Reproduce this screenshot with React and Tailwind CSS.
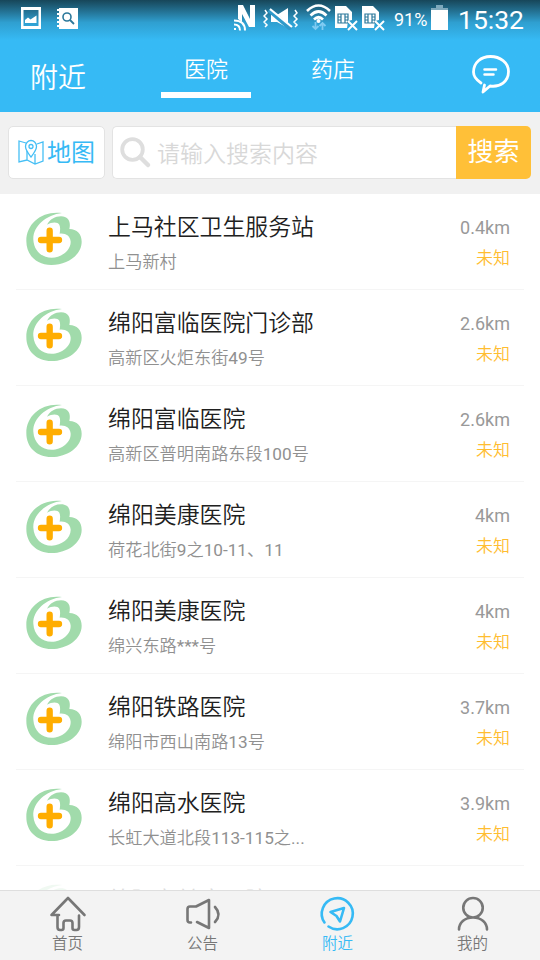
const hospitals = [
  ["上马社区卫生服务站", "上马新村", "0.4km"],
  ["绵阳富临医院门诊部", "高新区火炬东街49号", "2.6km"],
  ["绵阳富临医院", "高新区普明南路东段100号", "2.6km"],
  ["绵阳美康医院", "荷花北街9之10-11、11", "4km"],
  ["绵阳美康医院", "绵兴东路***号", "4km"],
  ["绵阳铁路医院", "绵阳市西山南路13号", "3.7km"],
  ["绵阳高水医院", "长虹大道北段113-115之...", "3.9km"],
];

function Logo() {
  return (
    <svg className="h-[76px] w-[76px] shrink-0" viewBox="0 0 228 228">
      <path
        fill="#a1dbab"
        d="M138 39C80 31 31 68 31 123C31 166 62 195 106 195C154 195 197 165 197 125C197 102 183 87 160 87C165 66 158 49 135 49C117 49 102 58 93 74C107 66 125 65 130 74C134 83 132 92 131 101C149 99 163 108 164 125C165 151 137 173 107 173C77 173 54 152 52 119C50 80 90 44 138 39Z"
      />
      <path d="M101 92V148M75 120H129" stroke="#ffad00" strokeWidth="19" strokeLinecap="round" />
    </svg>
  );
}

function SimIcon() {
  return (
    <svg className="h-[26px] w-[24px]" viewBox="0 0 24 26">
      <path fill="#fff" d="M1 1H12L18 7V15L14 16L13 23H1Z" />
      <path d="M4 9H14V18H4ZM7 9V18M11 9V18M4 12H7M11 12H14M4 15H7M11 15H14" fill="none" stroke="#2b789b" strokeWidth="1.2" />
      <path d="M14 16L23 25M23 16L14 25" stroke="#fff" strokeWidth="2" />
    </svg>
  );
}

function StatusBar() {
  return (
    <div className="flex h-[38px] items-start text-white">
      <svg className="mt-[7px] ml-[21px] h-[22px] w-5" viewBox="0 0 20 22">
        <path fill="#fff" fillRule="evenodd" d="M0 0H20V22H0ZM2.5 3V19H17.500V3Z" />
        <path fill="#fff" d="M4 16V13L7 10.500L9.500 12.500L15.500 8.500V16Z" />
      </svg>
      <svg className="mt-[8px] ml-4 h-[21px] w-[21px]" viewBox="0 0 21 21">
        <path fill="#fff" d="M2 0H21V21H2V19H0V17H2V15H0V13H2V11H0V9H2V7H0V5H2V3H0V1H2Z" />
        <circle cx="10" cy="9" r="4" fill="none" stroke="#2b789b" strokeWidth="1.600" />
        <path d="M13 12L17 16" stroke="#2b789b" strokeWidth="1.800" />
      </svg>
      <svg className="mt-1 ml-[155px] h-[28px] w-[24px] shrink-0" viewBox="0 0 24 28">
        <path fill="#fff" d="M5 15V1H10L17 15V1H22V23H16L9 10V18Z" />
        <path d="M1 25H3M1 20.500Q7 20.500 7 26.500M1 16.500Q12 16.500 12 26.500" fill="none" stroke="#fff" strokeWidth="2" />
      </svg>
      <svg className="mt-2 ml-[6px] h-[22px] w-[36px] shrink-0" viewBox="0 0 36 22">
        <path fill="#fff" d="M8 7H14L25 0V20L14 14H8Z" />
        <path d="M6 2L28 21" stroke="#2f9aca" strokeWidth="4.500" />
        <path d="M7 1L29 19" stroke="#fff" strokeWidth="2.200" />
        <path d="M2 2L4 5L1 8L4 11L1 14L4 17L2 19M32 2L34 5L31 8L34 11L31 14L34 17L32 19" fill="none" stroke="#fff" strokeWidth="1.500" />
      </svg>
      <svg className="mt-1 ml-[7px] h-[28px] w-[27px] shrink-0" viewBox="0 0 27 28">
        <path d="M1 7Q12.500 -4 24 7M4.500 11.500Q12.500 3.500 20.500 11.500M8 15.500Q12.500 11 17 15.500" fill="none" stroke="#fff" strokeWidth="2.600" />
        <circle cx="12.500" cy="17" r="2" fill="#fff" />
        <path d="M9.500 18V25M6.500 22L9.500 25L12.500 22M16.500 26V19M13.500 22L16.500 19L19.500 22" fill="none" stroke="#7fcbf2" strokeWidth="1.800" />
      </svg>
      <div className="mt-[5px] ml-px flex shrink-0 gap-[3px]">
        <SimIcon />
        <SimIcon />
      </div>
      <span className="mt-[8px] ml-[9px] w-[34px] shrink-0 text-[18px] leading-6 whitespace-nowrap">91%</span>
      <svg className="mt-[5px] ml-[3px] h-[25px] w-[17px] shrink-0" viewBox="0 0 17 25">
        <path fill="#7fa9bc" d="M5 0H12V3H17V8H0V3H5Z" />
        <path fill="#fff" d="M0 5H17V25H0Z" />
      </svg>
      <span className="mt-[5px] ml-[10px] text-[26.500px] leading-[30px]">15:32</span>
    </div>
  );
}

function Header() {
  return (
    <header className="h-[112px] shrink-0 bg-[#36baf5] bg-linear-to-b from-[#174659] via-[#2f9fd0] via-20% to-[#36baf5] to-36% text-white">
      <StatusBar />
      <div className="flex h-[74px] font-[350]">
        <h1 className="mt-[20px] ml-[30px] w-[131px] text-[28px] leading-[42px] font-[350]">附近</h1>
        <div className="mt-[15px] h-[45px] w-[90px] border-b-[6px] border-white text-center text-[22px] leading-[34px]">医院</div>
        <div className="mt-[15px] ml-[37px] w-[90px] text-center text-[22px] leading-[34px]">药店</div>
        <svg className="mt-[17px] ml-[93px] h-10 w-10" viewBox="0 0 40 40">
          <path
            d="M10 28C5.500 25 2.500 21.500 2.500 17C2.500 7.500 10 1.500 19.500 1.500C29 1.500 37.500 7.500 37.500 16.500C37.500 26.500 29 32.500 19 31L12 37L13.500 30"
            fill="none" stroke="#fff" strokeWidth="2.800" strokeLinecap="round" strokeLinejoin="round"
          />
          <path d="M13.500 14.500H25M13.500 19.500H22.500" stroke="#fff" strokeWidth="2.500" strokeLinecap="round" />
        </svg>
      </div>
    </header>
  );
}

function SearchRow() {
  return (
    <div className="flex h-[82px] shrink-0 bg-[#f1f1f1] px-2 pt-[14px]">
      <button className="flex h-[53px] w-[97px] rounded-[5px] border border-[#e3e3e3] bg-white text-[#36baf5]">
        <svg className="mt-[12px] ml-[9px] h-7 w-[27px]" viewBox="0 0 27 28" fill="none" stroke="#45bff5" strokeWidth="1.300">
          <path d="M8 4L1 2V23L9 21L17 25L25 22V3L19 5M9 12V21M17 15V25" />
          <path d="M13 18C10 14 7.500 11 7.500 7.500C7.500 4 10 1.500 13 1.500S18.500 4 18.500 7.500C18.500 11 16 14 13 18Z" />
          <circle cx="13" cy="7.500" r="2" />
        </svg>
        <span className="mt-[8px] ml-[2px] text-[24px] leading-9">地图</span>
      </button>
      <div className="ml-[7px] flex h-[53px] w-[344px] rounded-l-[5px] border border-r-0 border-[#e3e3e3] bg-white">
        <svg className="mt-[10px] ml-[7px] h-8 w-8" viewBox="0 0 32 32" fill="none" stroke="#dedede">
          <circle cx="12.500" cy="12.500" r="10.300" strokeWidth="3.800" />
          <path d="M20 20L28 28" strokeWidth="4.500" strokeLinecap="round" />
        </svg>
        <span className="mt-[10px] ml-[5px] text-[23px] leading-9 font-[350] text-[#d8d8d8]">请输入搜索内容</span>
      </div>
      <button className="h-[53px] w-[75px] rounded-r-[5px] bg-[#ffc038] text-[26px] text-white">搜索</button>
    </div>
  );
}

// Digits and Latin marks take the regular weight, Chinese text the lighter one.
function Address({ text }) {
  return text.split(/([\d.*-]+)/).map((part, i) =>
    i % 2 ? <span key={i} className="font-normal">{part}</span> : part
  );
}

function HospitalRow({ name, address, distance }) {
  return (
    <li className="mx-4 flex h-24 border-b border-[#f5f5f5]">
      <div className="mt-[6px]">
        <Logo />
      </div>
      <div className="mt-[17px] ml-4 flex-1 whitespace-nowrap">
        <div className="text-[22.900px] leading-[34px] font-[350] text-[#202020]">{name}</div>
        <div className="mt-[5px] text-[17.200px] leading-6 font-[350] text-[#909090]">
          <Address text={address} />
        </div>
      </div>
      <div className="mt-[22px] mr-[14px] text-right">
        <div className="text-[18px] leading-6 text-[#999]">{distance}</div>
        <div className="mt-[6px] text-[17px] leading-6 font-[350] text-[#ffbd30]">未知</div>
      </div>
    </li>
  );
}

const tabs = [
  {
    label: "首页",
    icon: <path d="M12 20H4.500L21 3L37.500 20M10.500 20V32Q10.500 35 13 35H14.500Q16.500 35 16.500 33V28Q16.500 25.500 19 25.500H23Q25.500 25.500 25.500 28V33Q25.500 35 27.500 35H29.500Q32 35 32 32V20.500" />,
  },
  {
    label: "公告",
    icon: <path d="M9 27.500H8Q5.500 27.500 5.500 25V14Q5.500 11.500 8 11.500H14L27 5V33L15 27M33 12Q40 19.500 33 27" />,
  },
  {
    label: "附近",
    active: true,
    icon: <path d="M7.500 27.500A15.500 15.500 0 1 1 11.500 31.500M13.500 17L27 13L23 26.500L19.500 21Z" />,
  },
  {
    label: "我的",
    icon: <path d="M21 22.500A9.700 9.700 0 1 0 21 3A9.700 9.700 0 0 0 21 22.500C12.500 22.500 7 28 7 34.500M21 22.500C29.500 22.500 35 28 35 34.500" />,
  },
];

function TabIcon({ children }) {
  return (
    <svg className="h-[38px] w-[42px]" viewBox="0 0 42 38" fill="none" stroke="currentColor" strokeWidth="2.600" strokeLinecap="round" strokeLinejoin="round">
      {children}
    </svg>
  );
}

export default function App() {
  return (
    <div className="flex h-[960px] w-[540px] flex-col overflow-hidden bg-white font-[Roboto,'Noto_Sans_CJK_SC',sans-serif]">
      <Header />
      <SearchRow />
      <ul className="h-[696px] shrink-0 overflow-hidden">
        {hospitals.map(([name, address, distance], i) => (
          <HospitalRow key={i} name={name} address={address} distance={distance} />
        ))}
        <li className="mx-4 flex h-24 opacity-15">
          <div className="mt-[6px]">
            <Logo />
          </div>
          <div className="mt-[18px] ml-4 text-[22.900px] leading-[34px] font-[350] text-[#202020]">绵阳市益康医院</div>
        </li>
      </ul>
      <nav className="grid h-[70px] shrink-0 grid-cols-4 border-t border-[#dedede] bg-[#f3f3f3]">
        {tabs.map((tab) => (
          <div key={tab.label} className={tab.active ? "flex flex-col items-center pt-[4px] text-[#36baf5]" : "flex flex-col items-center pt-[4px] text-[#777]"}>
            <TabIcon>{tab.icon}</TabIcon>
            <span className="mt-px text-[15.500px] leading-[20px] font-[350]">{tab.label}</span>
          </div>
        ))}
      </nav>
    </div>
  );
}
